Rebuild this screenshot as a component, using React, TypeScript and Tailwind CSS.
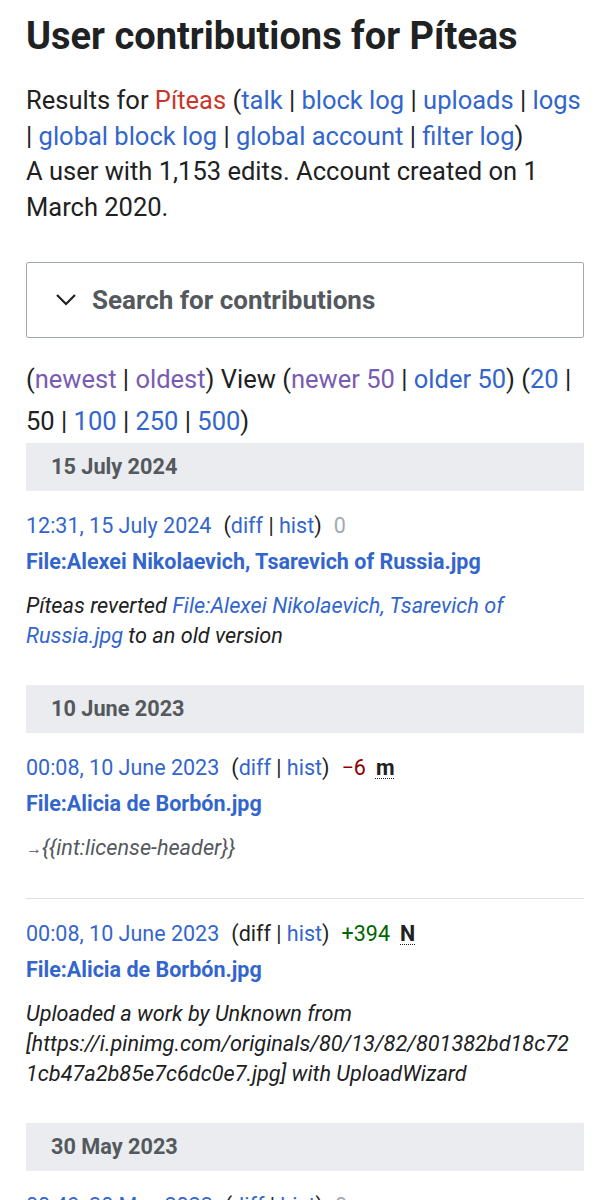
import React from 'react';

const link = 'text-[#3366cc]';
const visited = 'text-[#795cb2]';

function Sep() {
  return <span> | </span>;
}

function DateHeader({ children }: { children: React.ReactNode }) {
  return (
    <div className="h-[48px] bg-[#eaecf0] pl-[25px] flex items-center text-[21.7px] font-bold text-[#54595d]">
      {children}
    </div>
  );
}

type Entry = {
  time: string;
  diff: boolean;
  size: React.ReactNode;
  flag?: string;
  title: string;
  comment: React.ReactNode;
  last?: boolean;
};

function Flag({ children }: { children: React.ReactNode }) {
  return (
    <b className="ml-[10px] text-[#202122] underline decoration-dotted decoration-1 underline-offset-[3px]">
      {children}
    </b>
  );
}

function EntryRow({ e }: { e: Entry }) {
  return (
    <div className={`pt-[17px] pb-[34px] ${e.last ? '' : 'border-b border-[#dcdfe4]'}`}>
      <div className="leading-[36px] text-[21.5px] whitespace-nowrap">
        <span className={link}>{e.time}</span>
        <span className="ml-[12px]">(</span>
        {e.diff ? <span className={link}>diff</span> : <span>diff</span>}
        <Sep />
        <span className={link}>hist</span>
        <span>)</span>
        <span className="ml-[12px]">{e.size}</span>
        {e.flag && <Flag>{e.flag}</Flag>}
      </div>
      <div className={`leading-[36px] text-[21.5px] font-bold ${link}`}>{e.title}</div>
      <div className="mt-[11px] pr-[12px] leading-[30px] text-[21.7px] italic">{e.comment}</div>
    </div>
  );
}

export default function App() {
  return (
    <div className="bg-white min-h-[1200px] px-[26px] text-[#202122] font-['Roboto',sans-serif]">
      <h1 className="pt-[18px] text-[38px] leading-[37px] font-bold">User contributions for Píteas</h1>

      <div className="mt-[28px] text-[25.5px] leading-[35.5px]">
        Results for <span className="text-[#c9372c]">Píteas</span> (<span className={link}>talk</span>
        <Sep />
        <span className={link}>block log</span>
        <Sep />
        <span className={link}>uploads</span>
        <Sep />
        <span className={link}>logs</span>
        <Sep />
        <span className={link}>global block log</span>
        <Sep />
        <span className={link}>global account</span>
        <Sep />
        <span className={link}>filter log</span>)
        <br />
        A user with 1,153 edits. Account created on 1 March 2020.
      </div>

      {/* Search form (collapsed) */}
      <div className="mt-[37px] h-[76px] border border-[#a2a9b1] rounded-[2px] flex items-center pl-[28px]">
        <svg width="22" height="14" viewBox="0 0 22 14" className="mr-[15px]">
          <path d="M2 2 L11 11 L20 2" fill="none" stroke="#202122" strokeWidth="2.2" />
        </svg>
        <span className="text-[26px] font-bold text-[#54595d]">Search for contributions</span>
      </div>

      <div className="mt-[20px] text-[25.5px] leading-[42px]">
        (<span className={visited}>newest</span>
        <Sep />
        <span className={visited}>oldest</span>) View (<span className={visited}>newer 50</span>
        <Sep />
        <span className={link}>older 50</span>) (<span className={link}>20</span>
        <Sep />
        50
        <Sep />
        <span className={link}>100</span>
        <Sep />
        <span className={link}>250</span>
        <Sep />
        <span className={link}>500</span>)
      </div>

      <div className="mt-[1px]">
        <DateHeader>15 July 2024</DateHeader>
        <EntryRow
          e={{
            time: '12:31, 15 July 2024',
            diff: true,
            size: <span className="text-[#a2a9b1]">0</span>,
            title: 'File:Alexei Nikolaevich, Tsarevich of Russia.jpg',
            comment: (
              <>
                Píteas reverted <span className={link}>File:Alexei Nikolaevich, Tsarevich of Russia.jpg</span> to an
                old version
              </>
            ),
            last: true,
          }}
        />

        <DateHeader>10 June 2023</DateHeader>
        <EntryRow
          e={{
            time: '00:08, 10 June 2023',
            diff: true,
            size: <span className="text-[#8b0000]">−6</span>,
            flag: 'm',
            title: 'File:Alicia de Borbón.jpg',
            comment: (
              <span className="text-[#54595d]">
                <span className="not-italic text-[16px] align-middle">→</span>
                {'{{int:license-header}}'}
              </span>
            ),
          }}
        />
        <EntryRow
          e={{
            time: '00:08, 10 June 2023',
            diff: false,
            size: <span className="text-[#006400]">+394</span>,
            flag: 'N',
            title: 'File:Alicia de Borbón.jpg',
            comment: (
              <span className="break-all">
                Uploaded a work by Unknown from<br />
                [https://i.pinimg.com/originals/80/13/82/801382bd18c721cb47a2b85e7c6dc0e7.jpg] with UploadWizard
              </span>
            ),
            last: true,
          }}
        />

        <DateHeader>30 May 2023</DateHeader>
        <EntryRow
          e={{
            time: '00:49, 30 May 2023',
            diff: true,
            size: <span className="text-[#a2a9b1]">0</span>,
            title: 'File:Alicia de Borbón.jpg',
            comment: '',
            last: true,
          }}
        />
      </div>
    </div>
  );
}
